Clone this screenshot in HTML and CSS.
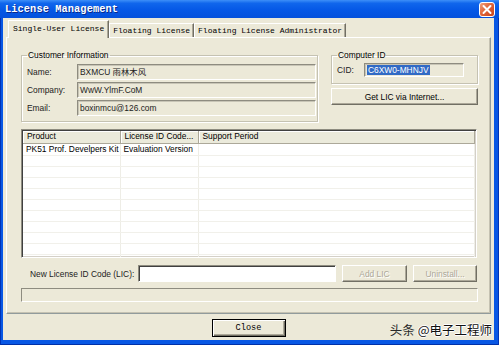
FILE: index.html
```html
<!DOCTYPE html>
<html lang="en">
<head>
    <meta charset="utf-8">
    <title>License Management</title>
    <link rel="stylesheet" href="styles.css">
</head>
<body>

<div class="window">
    <div class="titlebar">
        <span class="title">License Management</span>
        <span class="close-x">
            <svg width="16" height="15" viewBox="0 0 16 15">
                <path d="M4.5 4 L11.5 11 M11.5 4 L4.5 11" stroke="#fff" stroke-width="2" stroke-linecap="round"/>
            </svg>
        </span>
    </div>

    <div class="client">
        <!-- Tabs -->
        <div class="tabs">
            <span class="tab active">Single-User License</span>
            <span class="tab">Floating License</span>
            <span class="tab">Floating License Administrator</span>
        </div>

        <div class="panel">
            <div class="top-row">
                <fieldset class="group customer">
                    <legend>Customer Information</legend>
                    <div class="field-row">
                        <label>Name:</label>
                        <div class="field cjk">BXMCU 雨林木风</div>
                    </div>
                    <div class="field-row">
                        <label>Company:</label>
                        <div class="field">WwW.YlmF.CoM</div>
                    </div>
                    <div class="field-row">
                        <label>Email:</label>
                        <div class="field">boxinmcu@126.com</div>
                    </div>
                </fieldset>

                <div class="right-col">
                    <fieldset class="group computer">
                        <legend>Computer ID</legend>
                        <div class="field-row cid-row">
                            <label>CID:</label>
                            <div class="field cid"><span class="selected">C6XW0-MHNJV</span></div>
                        </div>
                    </fieldset>
                    <button class="btn get-lic">Get LIC via Internet...</button>
                </div>
            </div>

            <!-- License list -->
            <div class="listview">
                <table>
                    <colgroup>
                        <col class="col-product">
                        <col class="col-lic">
                        <col>
                    </colgroup>
                    <thead>
                        <tr><th>Product</th><th>License ID Code...</th><th>Support Period</th></tr>
                    </thead>
                    <tbody>
                        <tr class="first"><td>PK51 Prof. Develpers Kit</td><td>Evaluation Version</td><td></td></tr>
                        <tr><td></td><td></td><td></td></tr>
                        <tr><td></td><td></td><td></td></tr>
                        <tr><td></td><td></td><td></td></tr>
                        <tr><td></td><td></td><td></td></tr>
                        <tr><td></td><td></td><td></td></tr>
                        <tr><td></td><td></td><td></td></tr>
                        <tr><td></td><td></td><td></td></tr>
                        <tr><td></td><td></td><td></td></tr>
                        <tr><td></td><td></td><td></td></tr>
                        <tr><td></td><td></td><td></td></tr>
                    </tbody>
                </table>
            </div>

            <div class="lic-row">
                <label>New License ID Code (LIC):</label>
                <input type="text" class="lic-input">
                <button class="btn disabled add">Add LIC</button>
                <button class="btn disabled uninstall">Uninstall...</button>
            </div>

            <div class="progress"></div>
        </div>

        <div class="footer">
            <button class="btn default close">Close</button>
        </div>
    </div>

    <div class="watermark"><span class="wm-src">头条</span> <span class="wm-name">@电子工程师</span></div>
</div>

</body>
</html>
```

FILE: styles.css
```css
* {
    box-sizing: border-box;
}
html, body {
    margin: 0;
    padding: 0;
}
body {
    width: 499px;
    height: 345px;
    overflow: hidden;
    font-family: "Liberation Sans", Arial, sans-serif;
    font-size: 8.4px;
    color: #000;
}
.window {
    position: relative;
    width: 499px;
    height: 345px;
    display: flex;
    flex-direction: column;
    background: #0857e4;
    box-shadow: inset 1px 0 #0033b5, inset -1px 0 #0033b5, inset 0 -1px #0030a8;
}
.titlebar {
    height: 18px;
    display: flex;
    align-items: center;
    justify-content: space-between;
    padding: 0 4px 0 5px;
    background: linear-gradient(180deg, #3d8ff8 0%, #1066ec 18%, #0558e6 55%, #0451dc 100%);
}
.title {
    font-family: "Liberation Mono", "Courier New", monospace;
    font-weight: bold;
    font-size: 10.3px;
    color: #fff;
    text-shadow: 1px 1px 0 #0a2a8a;
    letter-spacing: 0.1px;
}
.close-x {
    width: 16px;
    height: 15px;
    margin-top: 1px;
    border: 1px solid #fff;
    border-radius: 3px;
    background: linear-gradient(135deg, #f0a07e 0%, #e0663a 45%, #c8431c 100%);
    display: flex;
}
.close-x svg {
    margin: -1px;
}
.client {
    flex: 1;
    margin: 0 5px 5px 3px;
    padding: 2px 3px 0;
    background: #ece9d8;
    display: flex;
    flex-direction: column;
}

/* Tabs */
.tabs {
    height: 17px;
    display: flex;
    align-items: flex-end;
    padding-left: 2px;
    font-family: "Liberation Mono", "Courier New", monospace;
    font-size: 8px;
}
.tab {
    height: 14px;
    line-height: 13px;
    padding: 0 3px;
    border-top: 1px solid #fff;
    border-left: 1px solid #fff;
    border-right: 1px solid #716f64;
    box-shadow: inset -1px 0 #aca899;
    white-space: nowrap;
}
.tab.active {
    height: 18px;
    line-height: 16px;
    padding: 0 4px;
    margin-bottom: -1px;
    background: #ece9d8;
    position: relative;
    z-index: 1;
}
.panel {
    height: 277px;
    border: 1px solid #919b9c;
    border-top-color: #fff;
    border-left-color: #fff;
    box-shadow: inset -1px -1px #c5c2b2;
    padding: 12px 12px 0 14px;
}

/* Group boxes */
.top-row {
    display: flex;
    gap: 13px;
}
.group {
    margin: 0;
    border: 1px solid #c5c2b2;
    box-shadow: inset 1px 1px 0 #fff, 1px 1px 0 #fff;
    padding: 4px 1px 5px 5px;
}
.group legend {
    padding: 0 1px;
    line-height: 10px;
    font-size: 8.4px;
}
.customer {
    width: 297px;
}
.field-row {
    display: flex;
    align-items: center;
    height: 16px;
    margin-bottom: 2px;
}
.field-row:last-of-type {
    margin-bottom: 0;
}
.field-row label {
    width: 50px;
    color: #222;
}
.field {
    flex: 1;
    height: 16px;
    line-height: 14px;
    padding-left: 2px;
    border: 1px solid;
    border-color: #8e8c80 #fff #fff #8e8c80;
    box-shadow: inset 1px 1px #c8c5b6;
    color: #222;
    white-space: nowrap;
    overflow: hidden;
}
.cjk {
    font-family: "Liberation Sans", "Noto Sans CJK SC", sans-serif;
}
.right-col {
    flex: 1;
    display: flex;
    flex-direction: column;
}
.computer {
    padding: 3px 12px 6px 5px;
}
.cid-row {
    height: 14px;
}
.cid-row label {
    width: 27px;
}
.field.cid {
    flex: none;
    width: 100px;
    height: 14px;
    line-height: 12px;
}
.selected {
    background: #316ac5;
    color: #fff;
    padding: 0 1px;
}

/* Buttons */
.btn {
    font-family: "Liberation Sans", Arial, sans-serif;
    font-size: 8.4px;
    color: #000;
    background: #ece9d8;
    border: 1px solid;
    border-color: #fff #716f64 #716f64 #fff;
    box-shadow: inset -1px -1px #aca899;
    padding: 0;
    margin: 0;
}
.get-lic {
    margin-top: 4px;
    height: 17px;
}
.btn.disabled {
    color: #aca899;
    text-shadow: 1px 1px 0 #fff;
}
.btn.default {
    border: 1px solid #000;
    box-shadow: inset 1px 1px #fff, inset -1px -1px #716f64, inset -2px -2px #aca899;
}

/* List view */
.listview {
    margin-top: 7px;
    width: 456px;
    height: 129px;
    overflow: hidden;
    background: #fff;
    border: 1px solid;
    border-color: #8e8c80 #fff #fff #8e8c80;
    box-shadow: inset 1px 1px #404040, inset -1px -1px #d4d0c8;
    padding: 1px;
}
.listview table {
    width: 100%;
    border-collapse: collapse;
    table-layout: fixed;
}
.col-product {
    width: 97px;
}
.col-lic {
    width: 78px;
}
.listview th {
    height: 12px;
    font-weight: normal;
    text-align: left;
    padding: 0 0 0 4px;
    background: #ebeadb;
    border-right: 1px solid #aca899;
    border-bottom: 1px solid #aca899;
    box-shadow: inset 1px 1px #fff;
    line-height: 11px;
    white-space: nowrap;
    overflow: hidden;
}
.listview td {
    height: 11px;
    padding: 0 0 0 3px;
    line-height: 10px;
    border-right: 1px solid #eeede6;
    border-bottom: 1px solid #f1f0ea;
    white-space: nowrap;
    overflow: hidden;
}
.listview tr.first td {
    height: 12px;
    line-height: 11px;
}

/* New LIC row */
.lic-row {
    margin-top: 7px;
    height: 17px;
    display: flex;
    align-items: center;
    gap: 6px;
}
.lic-row label {
    width: 111px;
    padding-left: 9px;
    color: #222;
    white-space: nowrap;
}
.lic-input {
    width: 198px;
    height: 17px;
    margin: 0;
    background: #fff;
    border: 1px solid;
    border-color: #8e8c80 #fff #fff #8e8c80;
    box-shadow: inset 1px 1px #404040;
}
.lic-row .btn {
    height: 17px;
}
.add {
    width: 65px;
}
.uninstall {
    width: 64px;
}
.progress {
    margin-top: 6px;
    width: 457px;
    height: 14px;
    border: 1px solid;
    border-color: #8e8c80 #fff #fff #8e8c80;
}

/* Footer */
.footer {
    flex: 1;
    display: flex;
    justify-content: center;
    align-items: flex-start;
    padding-top: 5px;
}
.close {
    width: 74px;
    height: 18px;
    font-family: "Liberation Mono", "Courier New", monospace;
    font-size: 8.6px;
}
.watermark {
    position: absolute;
    right: 7px;
    bottom: 7px;
    font-family: "Noto Sans CJK SC", sans-serif;
    font-size: 12.5px;
    line-height: 17px;
    white-space: nowrap;
}
.wm-src {
    color: #2a2a2a;
}
.wm-name {
    color: #111;
    text-shadow: 1px 0 0 #fff, -1px 0 0 #fff, 0 1px 0 #fff, 0 -1px 0 #fff;
}
```
